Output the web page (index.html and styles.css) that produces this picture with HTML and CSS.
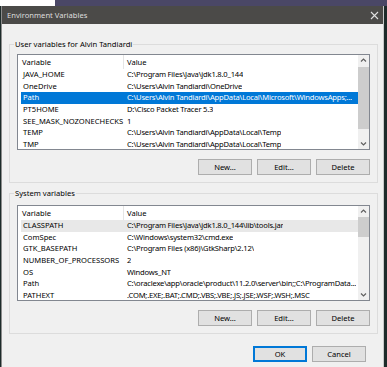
FILE: index.html
```html
<!DOCTYPE html>
<html lang="en">
<head>
    <meta charset="UTF-8">
    <title>Environment Variables</title>
    <link rel="stylesheet" href="styles.css">
</head>
<body>
    <div class="screen">
        <div class="window">
            <div class="titlebar">
                <span class="title">Environment Variables</span>
                <svg class="close" width="9" height="9" viewBox="0 0 9 9">
                    <path d="M1 1 L8 8 M8 1 L1 8" stroke="#e0e0e0" stroke-width="1.1" fill="none"/>
                </svg>
            </div>

            <div class="content">
                <fieldset class="group">
                    <legend>User variables for Alvin Tandiardi</legend>
                    <div class="list">
                        <div class="table">
                            <div class="head">
                                <span class="col-name">Variable</span>
                                <span class="col-value">Value</span>
                            </div>
                            <div class="row"><span class="col-name">JAVA_HOME</span><span class="col-value">C:\Program Files\Java\jdk1.8.0_144</span></div>
                            <div class="row"><span class="col-name">OneDrive</span><span class="col-value">C:\Users\Alvin Tandiardi\OneDrive</span></div>
                            <div class="row selected"><span class="col-name">Path</span><span class="col-value">C:\Users\Alvin Tandiardi\AppData\Local\Microsoft\WindowsApps;...</span></div>
                            <div class="row"><span class="col-name">PT5HOME</span><span class="col-value">D:\Cisco Packet Tracer 5.3</span></div>
                            <div class="row"><span class="col-name">SEE_MASK_NOZONECHECKS</span><span class="col-value">1</span></div>
                            <div class="row"><span class="col-name">TEMP</span><span class="col-value">C:\Users\Alvin Tandiardi\AppData\Local\Temp</span></div>
                            <div class="row"><span class="col-name">TMP</span><span class="col-value">C:\Users\Alvin Tandiardi\AppData\Local\Temp</span></div>
                        </div>
                        <div class="scrollbar">
                            <svg class="arrow" width="11" height="11" viewBox="0 0 11 11"><path d="M3 6.5 L5.5 4 L8 6.5" stroke="#606060" stroke-width="1.2" fill="none"/></svg>
                            <div class="track"><div class="thumb thumb-user"></div></div>
                            <svg class="arrow" width="11" height="11" viewBox="0 0 11 11"><path d="M3 4.5 L5.5 7 L8 4.5" stroke="#606060" stroke-width="1.2" fill="none"/></svg>
                        </div>
                    </div>
                    <div class="buttons">
                        <button class="btn">New...</button>
                        <button class="btn">Edit...</button>
                        <button class="btn">Delete</button>
                    </div>
                </fieldset>

                <fieldset class="group group-system">
                    <legend>System variables</legend>
                    <div class="list">
                        <div class="table">
                            <div class="head">
                                <span class="col-name">Variable</span>
                                <span class="col-value">Value</span>
                            </div>
                            <div class="row inactive"><span class="col-name">CLASSPATH</span><span class="col-value">C:\Program Files\Java\jdk1.8.0_144\lib\tools.jar</span></div>
                            <div class="row"><span class="col-name">ComSpec</span><span class="col-value">C:\Windows\system32\cmd.exe</span></div>
                            <div class="row"><span class="col-name">GTK_BASEPATH</span><span class="col-value">C:\Program Files (x86)\GtkSharp\2.12\</span></div>
                            <div class="row"><span class="col-name">NUMBER_OF_PROCESSORS</span><span class="col-value">2</span></div>
                            <div class="row"><span class="col-name">OS</span><span class="col-value">Windows_NT</span></div>
                            <div class="row"><span class="col-name">Path</span><span class="col-value">C:\oraclexe\app\oracle\product\11.2.0\server\bin;;C:\ProgramData...</span></div>
                            <div class="row"><span class="col-name">PATHEXT</span><span class="col-value">.COM;.EXE;.BAT;.CMD;.VBS;.VBE;.JS;.JSE;.WSF;.WSH;.MSC</span></div>
                        </div>
                        <div class="scrollbar">
                            <svg class="arrow" width="11" height="11" viewBox="0 0 11 11"><path d="M3 6.5 L5.5 4 L8 6.5" stroke="#606060" stroke-width="1.2" fill="none"/></svg>
                            <div class="track"><div class="thumb thumb-system"></div></div>
                            <svg class="arrow" width="11" height="11" viewBox="0 0 11 11"><path d="M3 4.5 L5.5 7 L8 4.5" stroke="#606060" stroke-width="1.2" fill="none"/></svg>
                        </div>
                    </div>
                    <div class="buttons">
                        <button class="btn">New...</button>
                        <button class="btn">Edit...</button>
                        <button class="btn">Delete</button>
                    </div>
                </fieldset>

                <div class="dialog-buttons">
                    <button class="btn btn-default">OK</button>
                    <button class="btn">Cancel</button>
                </div>
            </div>
        </div>
    </div>
</body>
</html>
```

FILE: styles.css
```css
* {
    margin: 0;
    padding: 0;
    box-sizing: border-box;
}

body {
    font-family: 'Noto Sans', 'Open Sans', sans-serif;
    font-size: 7.6px;
    color: #000;
}

/* Desktop behind the dialog */
.screen {
    width: 387px;
    height: 367px;
    overflow: hidden;
    background:
        linear-gradient(to right, #ffffff 0 55px, #4a4766 55px 100%) top / 100% 6px no-repeat,
        #1d2b2a;
}

.window {
    margin: 6px 0 0 1px;
    width: 383px;
    height: 361px;
    background: #f0f0f0;
    border-left: 1px solid #8c8c8c;
    border-right: 1px solid #c8c8c8;
}

.titlebar {
    height: 18px;
    background: #4b4a48;
    display: flex;
    align-items: center;
    justify-content: space-between;
    padding: 0 3px 0 5px;
}

.title {
    color: #dedede;
    font-size: 7.6px;
}

.close {
    margin-right: 1px;
}

.content {
    padding: 14px 5px 0 7px;
}

/* Group boxes */
.group {
    border: 1px solid #dcdcdc;
    padding: 4px 7px 7px 7px;
    min-width: 0;
}

.group legend {
    margin-left: -3px;
    padding: 0 1px;
    line-height: 12px;
}

.group-system {
    margin-top: 4px;
}

.group-system .list {
    margin-top: 2px;
}

/* List views */
.list {
    height: 96px;
    border: 1px solid #828790;
    background: #fff;
    display: flex;
    overflow: hidden;
}

.table {
    flex: 1;
    min-width: 0;
    overflow: hidden;
}

.head {
    display: flex;
    height: 14px;
    align-items: center;
}

.head .col-name {
    width: 106px;
    padding-left: 4px;
    border-right: 1px solid #e5e5e5;
    height: 14px;
    line-height: 14px;
}

.head .col-value {
    padding-left: 3px;
}

.row {
    display: flex;
    height: 11.7px;
    line-height: 11.7px;
    margin-left: 3px;
    white-space: nowrap;
}

.row .col-name {
    width: 103px;
    flex: none;
    padding-left: 2px;
}

.row .col-value {
    padding-left: 3px;
    overflow: hidden;
    letter-spacing: -0.2px;
}

.row.selected {
    background: #0078d7;
    color: #fff;
}

.row.inactive {
    background: #e8e8e8;
}

/* Scrollbars */
.scrollbar {
    width: 11px;
    flex: none;
    background: #f0f0f0;
    display: flex;
    flex-direction: column;
}

.arrow {
    display: block;
    flex: none;
}

.track {
    flex: 1;
}

.thumb {
    background: #cdcdcd;
}

.thumb-user {
    margin-top: 1px;
    height: 62px;
}

.thumb-system {
    height: 20px;
}

/* Buttons */
.buttons {
    display: flex;
    justify-content: flex-end;
    gap: 5px;
    margin-top: 9px;
}

.btn {
    width: 54px;
    height: 16px;
    background: #e1e1e1;
    border: 1px solid #adadad;
    font-family: inherit;
    font-size: 7.6px;
    color: #000;
}

.btn-default {
    border: 1px solid #0078d7;
    box-shadow: inset 0 0 0 1px #0078d7;
}

.dialog-buttons {
    display: flex;
    justify-content: flex-end;
    gap: 5px;
    margin-top: 12px;
    padding-right: 12px;
}
```
